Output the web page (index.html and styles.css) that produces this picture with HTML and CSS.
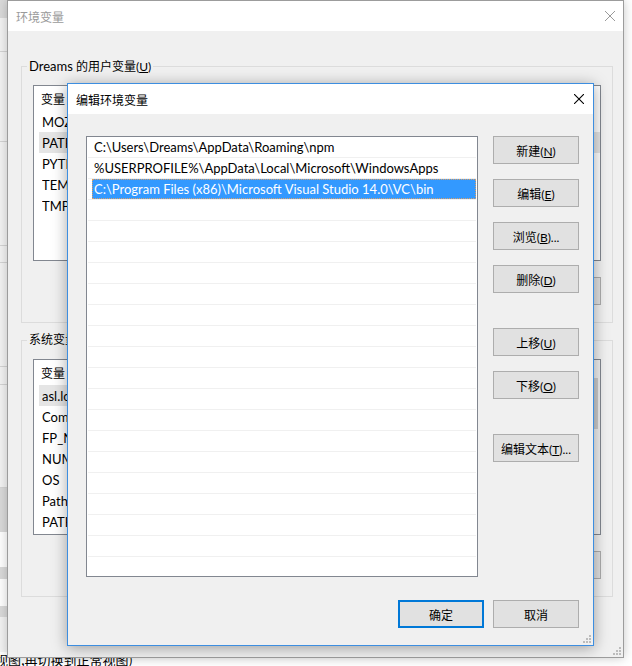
FILE: index.html
```html
<!DOCTYPE html>
<html lang="zh-CN">
<head>
    <meta charset="UTF-8">
    <title>编辑环境变量</title>
    <link rel="stylesheet" href="styles.css">
</head>
<body>
    <div class="desk">
        <div class="page-behind">
            <div class="page-side">
                <div class="side-band band-top"></div>
                <div class="side-line" style="height:34px"></div>
                <div class="side-line" style="height:90px"></div>
                <div class="side-line" style="height:104px"></div>
                <div class="side-line" style="height:17px"></div>
                <div class="side-line" style="height:104px"></div>
                <div class="side-line" style="height:18px"></div>
                <div class="side-line" style="height:103px"></div>
                <div class="side-band" style="height:44px"></div>
                <div class="side-gap" style="height:35px"></div>
                <div class="side-band" style="height:12px"></div>
                <div class="side-gap" style="height:27px"></div>
                <div class="side-band" style="height:11px"></div>
            </div>
            <p class="page-note">视图,再切换到正常视图)</p>
        </div>

        <!-- 背后的“环境变量”窗口 -->
        <div class="window env-window">
            <div class="titlebar">
                <span class="title">环境变量</span>
                <svg class="close" width="10" height="10" viewBox="0 0 10 10"><path d="M0 0L10 10M10 0L0 10" stroke="#9a9a9a" stroke-width="1"/></svg>
            </div>
            <div class="window-body">
                <fieldset class="group">
                    <legend><span class="latin">Dreams</span> 的用户变量(<u>U</u>)</legend>
                    <div class="listview">
                        <div class="lv-content">
                            <div class="lv-head"><span class="lv-col">变量</span></div>
                            <div class="lv-row"><span class="lv-col">MOZ_PLUGIN_PATH</span></div>
                            <div class="lv-row is-selected"><span class="lv-col">PATH</span></div>
                            <div class="lv-row"><span class="lv-col">PYTHONPATH</span></div>
                            <div class="lv-row"><span class="lv-col">TEMP</span></div>
                            <div class="lv-row"><span class="lv-col">TMP</span></div>
                        </div>
                    </div>
                    <div class="group-buttons">
                        <button class="btn"></button>
                        <button class="btn"></button>
                        <button class="btn"></button>
                    </div>
                </fieldset>

                <fieldset class="group group-system">
                    <legend>系统变量(<u>S</u>)</legend>
                    <div class="listview">
                        <div class="lv-content">
                            <div class="lv-head"><span class="lv-col">变量</span></div>
                            <div class="lv-row is-selected"><span class="lv-col">asl.log</span></div>
                            <div class="lv-row"><span class="lv-col">ComSpec</span></div>
                            <div class="lv-row"><span class="lv-col">FP_NO_HOST_CHECK</span></div>
                            <div class="lv-row"><span class="lv-col">NUMBER_OF_PROCESSORS</span></div>
                            <div class="lv-row"><span class="lv-col">OS</span></div>
                            <div class="lv-row"><span class="lv-col">Path</span></div>
                            <div class="lv-row"><span class="lv-col">PATHEXT</span></div>
                        </div>
                        <div class="lv-scroll"><div class="lv-thumb"></div></div>
                    </div>
                    <div class="group-buttons">
                        <button class="btn"></button>
                        <button class="btn"></button>
                        <button class="btn"></button>
                    </div>
                </fieldset>
            </div>
            <svg class="grip" width="8" height="8" viewBox="0 0 8 8"><path d="M6 0h2v2h-2zM3 3h2v2h-2zM6 3h2v2h-2zM0 6h2v2h-2zM3 6h2v2h-2zM6 6h2v2h-2z" fill="#bcbcbc"/></svg>
        </div>

        <!-- 编辑环境变量 对话框 -->
        <div class="window edit-dialog">
            <div class="dlg-titlebar">
                <span class="dlg-title">编辑环境变量</span>
                <svg class="dlg-close" width="10" height="10" viewBox="0 0 10 10"><path d="M0 0L10 10M10 0L0 10" stroke="#000" stroke-width="1.1"/></svg>
            </div>
            <div class="dlg-body">
                <div class="dlg-main">
                    <div class="path-list">
                        <div class="path-row"><span class="path-text">C:\Users\Dreams\AppData\Roaming\npm</span></div>
                        <div class="path-row"><span class="path-text">%USERPROFILE%\AppData\Local\Microsoft\WindowsApps</span></div>
                        <div class="path-row"><span class="path-text is-selected">C:\Program Files (x86)\Microsoft Visual Studio 14.0\VC\bin</span></div>
                        <div class="path-row"></div>
                        <div class="path-row"></div>
                        <div class="path-row"></div>
                        <div class="path-row"></div>
                        <div class="path-row"></div>
                        <div class="path-row"></div>
                        <div class="path-row"></div>
                        <div class="path-row"></div>
                        <div class="path-row"></div>
                        <div class="path-row"></div>
                        <div class="path-row"></div>
                        <div class="path-row"></div>
                        <div class="path-row"></div>
                        <div class="path-row"></div>
                        <div class="path-row"></div>
                        <div class="path-row"></div>
                        <div class="path-row"></div>
                        <div class="path-row"></div>
                    </div>
                    <div class="btn-col">
                        <button class="btn">新建(<u>N</u>)</button>
                        <button class="btn">编辑(<u>E</u>)</button>
                        <button class="btn">浏览(<u>B</u>)...</button>
                        <button class="btn">删除(<u>D</u>)</button>
                        <button class="btn btn-apart">上移(<u>U</u>)</button>
                        <button class="btn">下移(<u>O</u>)</button>
                        <button class="btn btn-apart">编辑文本(<u>T</u>)...</button>
                    </div>
                </div>
                <div class="dlg-footer">
                    <button class="btn btn-default">确定</button>
                    <button class="btn">取消</button>
                </div>
            </div>
            <svg class="grip" width="8" height="8" viewBox="0 0 8 8"><path d="M6 0h2v2h-2zM3 3h2v2h-2zM6 3h2v2h-2zM0 6h2v2h-2zM3 6h2v2h-2zM6 6h2v2h-2z" fill="#bcbcbc"/></svg>
        </div>
    </div>
</body>
</html>
```

FILE: styles.css
```css
* {
    box-sizing: border-box;
}
body {
    margin: 0;
    font-family: Lato, "Noto Sans CJK SC", sans-serif;
    font-size: 12px;
    color: #000;
}
.latin {
    font-size: 13px;
}
.desk {
    position: relative;
    width: 632px;
    height: 666px;
    overflow: hidden;
    background: #fff;
}

/* page behind the windows */
.page-behind {
    display: flex;
    flex-direction: column;
    height: 100%;
}
.page-side {
    width: 8px;
    flex: 1;
    background: #f3f3f3;
}
.side-band {
    height: 18px;
    background: #dadada;
}
.side-line {
    border-bottom: 1px solid #d4d4d4;
}
.side-gap {
    background: #fff;
}
.page-note {
    margin: 0 0 0 -5px;
    height: 14px;
    line-height: 15px;
    font-size: 13px;
    font-family: "Noto Sans CJK SC", sans-serif;
    white-space: nowrap;
}

/* windows */
.window {
    position: absolute;
}
.env-window {
    left: 7px;
    top: 0;
    width: 617px;
    height: 658px;
    border: 1px solid #9c9c9c;
    background: #f0f0f0;
    box-shadow: 0 0 10px rgba(0, 0, 0, 0.22);
}
.titlebar {
    height: 30px;
    background: #fff;
    display: flex;
    align-items: center;
    justify-content: space-between;
    padding: 0 8px;
}
.title {
    color: #9a9a9a;
}
.window-body {
    padding: 27px 10px 0 13px;
}
.group {
    margin: 0;
    padding: 10px 11px 17px 11px;
    border: 1px solid #dcdcdc;
    min-width: 0;
}
.group legend {
    padding: 0 2px;
    margin-left: -6px;
    line-height: 16px;
}
.group-system {
    margin-top: 9px;
    padding-top: 11px;
}
.listview {
    height: 176px;
    border: 1px solid #828790;
    background: #fff;
    display: flex;
    overflow: hidden;
}
.lv-content {
    flex: 1;
    min-width: 0;
}
.lv-head {
    height: 25px;
    display: flex;
    align-items: center;
    padding-left: 7px;
}
.lv-row {
    height: 21px;
    display: flex;
    align-items: center;
    margin-left: 5px;
    padding-left: 3px;
    white-space: nowrap;
    font-size: 13px;
}
.lv-row.is-selected {
    background: #e5e5e5;
}
.lv-col {
    width: 48px;
    overflow: hidden;
    flex-shrink: 0;
}
.lv-scroll {
    width: 17px;
    background: #f0f0f0;
    padding: 18px 2px 0 2px;
}
.lv-thumb {
    height: 51px;
    background: #cdcdcd;
}
.group-buttons {
    display: flex;
    justify-content: flex-end;
    gap: 8px;
    margin-top: 16px;
}

.btn {
    width: 86px;
    height: 28px;
    padding: 0;
    background: #e1e1e1;
    border: 1px solid #adadad;
    font: inherit;
    color: #000;
}
.btn-default {
    border: 2px solid #0078d7;
}
.grip {
    position: absolute;
    right: 2px;
    bottom: 2px;
}

/* edit dialog */
.edit-dialog {
    left: 67px;
    top: 83px;
    width: 527px;
    height: 563px;
    border: 1px solid #3d8ee0;
    background: #f0f0f0;
    box-shadow: 0 2px 14px rgba(0, 0, 0, 0.35);
    display: flex;
    flex-direction: column;
}
.dlg-titlebar {
    height: 30px;
    background: #fff;
    display: flex;
    align-items: center;
    justify-content: space-between;
    padding: 0 9px 0 8px;
}
.dlg-body {
    flex: 1;
    padding: 22px 14px 17px 18px;
    display: flex;
    flex-direction: column;
}
.dlg-main {
    display: flex;
    gap: 15px;
    height: 441px;
}
.path-list {
    width: 392px;
    border: 1px solid #828790;
    background: #fff;
    padding: 0 1px;
    overflow: hidden;
}
.path-row {
    height: 21px;
    flex-shrink: 0;
    border-bottom: 1px solid #f0f0f0;
    display: flex;
    padding-left: 4px;
}
.path-text {
    flex: 1;
    padding-left: 2px;
    line-height: 20px;
    font-size: 13px;
    white-space: nowrap;
}
.path-text.is-selected {
    background: #3399ff;
    color: #fff;
    outline: 1px dotted #d9a06a;
    outline-offset: -1px;
}
.btn-col {
    display: flex;
    flex-direction: column;
    gap: 15px;
}
.btn-apart {
    margin-top: 20px;
}
.dlg-footer {
    display: flex;
    justify-content: flex-end;
    gap: 9px;
    margin-top: 23px;
}
```
